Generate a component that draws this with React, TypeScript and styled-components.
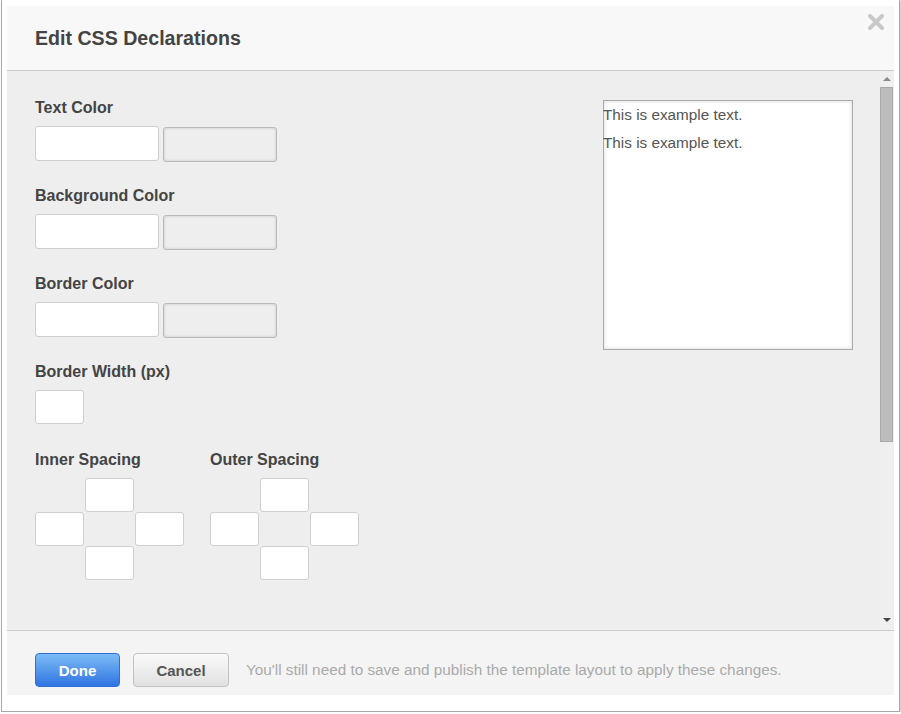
import React from "react";
import styled, { createGlobalStyle } from "styled-components";

const Global = createGlobalStyle`
  html, body { margin: 0; padding: 0; background: #fff; }
  body { font-family: "Liberation Sans", Arial, sans-serif; }
  * { box-sizing: border-box; }
`;

const Frame = styled.div`
  margin-left: 1px;
  width: 899px;
  height: 712px;
  background: #fff;
  border: 1px solid #a8a8a8;
  border-top: none;
  box-shadow: 1px 1px 2px rgba(0, 0, 0, 0.25);
  padding: 6px 0 0 5px;
`;

const Dialog = styled.div`
  width: 887px;
  height: 689px;
  display: flex;
  flex-direction: column;
`;

const Header = styled.div`
  position: relative;
  height: 65px;
  flex: none;
  background: #f8f8f8;
  border-bottom: 1px solid #cccccc;
  display: flex;
  align-items: center;
  padding-left: 28px;
`;

const Title = styled.h1`
  margin: 0;
  font-size: 19.6px;
  font-weight: bold;
  color: #444;
`;

const Close = styled.button`
  position: absolute;
  right: 10px;
  top: 8px;
  width: 16px;
  height: 16px;
  padding: 0;
  border: none;
  background: none;
  display: flex;
`;

const Body = styled.div`
  height: 560px;
  flex: none;
  display: flex;
  background: #eeeeee;
  border-bottom: 1px solid #cccccc;
`;

const Content = styled.div`
  flex: 1;
  display: flex;
  justify-content: space-between;
  padding: 25px 26px 0 28px;
`;

const LeftColumn = styled.div`
  display: flex;
  flex-direction: column;
`;

const Field = styled.div<{ $after: number }>`
  display: flex;
  flex-direction: column;
  margin-bottom: ${(p) => p.$after}px;
`;

const Label = styled.label`
  font-size: 16px;
  line-height: 20px;
  font-weight: bold;
  color: #444;
  padding-top: 2px;
  margin-bottom: 8px;
`;

const InputRow = styled.div`
  display: flex;
  align-items: flex-start;
  gap: 4px;
`;

const TextInput = styled.input<{ $w: number; $h: number }>`
  width: ${(p) => p.$w}px;
  height: ${(p) => p.$h}px;
  background: #fff;
  border: 1px solid #cfcfcf;
  border-radius: 3px;
  padding: 0 6px;
  font: inherit;
  outline: none;
`;

const Swatch = styled.div`
  margin-top: 1px;
  width: 114px;
  height: 35px;
  background: #eeeeee;
  border: 1px solid #b9b9b9;
  border-radius: 3px;
  box-shadow: inset 0 0 3px rgba(0, 0, 0, 0.18);
`;

const SpacingRow = styled.div`
  display: flex;
  gap: 26px;
`;

const Cross = styled.div`
  display: grid;
  grid-template-columns: repeat(3, 49px);
  grid-template-rows: repeat(3, 34px);
  column-gap: 1px;
`;

const CrossCell = styled(TextInput)<{ $col: number; $row: number }>`
  grid-column: ${(p) => p.$col};
  grid-row: ${(p) => p.$row};
`;

const Preview = styled.div`
  margin-top: 4px;
  width: 250px;
  height: 250px;
  background: #fff;
  border: 1px solid #aaaaaa;
  box-shadow: inset 0 0 4px rgba(0, 0, 0, 0.15);
`;

const PreviewText = styled.p`
  margin: 0;
  font-size: 15.3px;
  line-height: 28px;
  color: #555;
  position: relative;
  left: -1px;
`;

const Scrollbar = styled.div`
  width: 15px;
  flex: none;
  background: #efefef;
  display: flex;
  flex-direction: column;
  align-items: center;
  padding: 4px 0 6px;
`;

const Arrow = styled.svg`
  flex: none;
  width: 8px;
  height: 8px;
`;

const Thumb = styled.div`
  margin-top: 4px;
  width: 13px;
  height: 355px;
  background: #bcbcbc;
  border: 1px solid #a9a9a9;
`;

const Spacer = styled.div`
  flex: 1;
`;

const Footer = styled.div`
  height: 64px;
  flex: none;
  background: #f4f4f4;
  display: flex;
  align-items: center;
  padding: 22px 0 8px 28px;
`;

const Button = styled.button<{ $primary?: boolean; $w: number }>`
  width: ${(p) => p.$w}px;
  height: 34px;
  border-radius: 4px;
  font-family: "Liberation Sans", Arial, sans-serif;
  font-size: 15px;
  font-weight: bold;
  padding: 0;
  margin-right: 13px;
  cursor: pointer;
  border: 1px solid ${(p) => (p.$primary ? "#2f6fdc" : "#c2c2c2")};
  color: ${(p) => (p.$primary ? "#fff" : "#555")};
  background: ${(p) =>
    p.$primary
      ? "linear-gradient(#7dbcf6, #2f74e2)"
      : "linear-gradient(#fafafa, #e1e1e1)"};
`;

const Note = styled.span`
  margin-left: 4px;
  font-size: 15.3px;
  color: #aaaaaa;
`;

const Spacing = ({ title }: { title: string }) => (
  <Field $after={0}>
    <Label>{title}</Label>
    <Cross>
      <CrossCell $w={49} $h={34} $col={2} $row={1} />
      <CrossCell $w={49} $h={34} $col={1} $row={2} />
      <CrossCell $w={49} $h={34} $col={3} $row={2} />
      <CrossCell $w={49} $h={34} $col={2} $row={3} />
    </Cross>
  </Field>
);

export default function App() {
  const colors = ["Text Color", "Background Color", "Border Color"];
  return (
    <Frame>
      <Global />
      <Dialog>
        <Header>
          <Title>Edit CSS Declarations</Title>
          <Close aria-label="Close">
            <svg width="16" height="16" viewBox="0 0 16 16">
              <path d="M2 2 L14 14 M14 2 L2 14" stroke="#c9c9c9" strokeWidth="4" strokeLinecap="square" />
            </svg>
          </Close>
        </Header>
        <Body>
          <Content>
            <LeftColumn>
              {colors.map((c) => (
                <Field key={c} $after={22}>
                  <Label>{c}</Label>
                  <InputRow>
                    <TextInput $w={124} $h={35} />
                    <Swatch />
                  </InputRow>
                </Field>
              ))}
              <Field $after={24}>
                <Label>Border Width (px)</Label>
                <TextInput $w={49} $h={34} />
              </Field>
              <SpacingRow>
                <Spacing title="Inner Spacing" />
                <Spacing title="Outer Spacing" />
              </SpacingRow>
            </LeftColumn>
            <Preview>
              <PreviewText>This is example text.</PreviewText>
              <PreviewText>This is example text.</PreviewText>
            </Preview>
          </Content>
          <Scrollbar>
            <Arrow viewBox="0 0 8 8">
              <path d="M0 6 L8 6 L4 2 Z" fill="#8a8a8a" />
            </Arrow>
            <Thumb />
            <Spacer />
            <Arrow viewBox="0 0 8 8">
              <path d="M0 2 L8 2 L4 6 Z" fill="#444" />
            </Arrow>
          </Scrollbar>
        </Body>
        <Footer>
          <Button $primary $w={85}>Done</Button>
          <Button $w={96}>Cancel</Button>
          <Note>You'll still need to save and publish the template layout to apply these changes.</Note>
        </Footer>
      </Dialog>
    </Frame>
  );
}
